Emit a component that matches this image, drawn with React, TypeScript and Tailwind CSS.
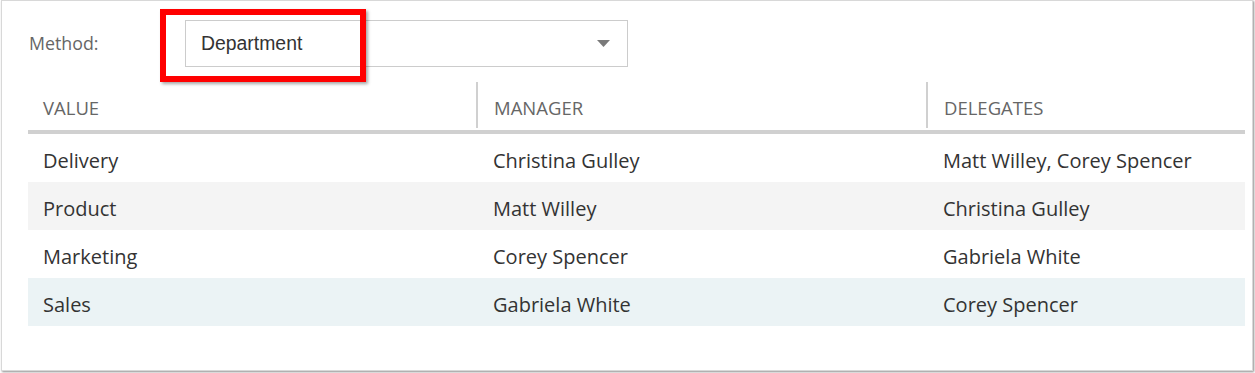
import React from 'react';

const rows = [
  { value: 'Delivery', manager: 'Christina Gulley', delegates: 'Matt Willey, Corey Spencer', bg: 'bg-white' },
  { value: 'Product', manager: 'Matt Willey', delegates: 'Christina Gulley', bg: 'bg-[#f4f4f4]' },
  { value: 'Marketing', manager: 'Corey Spencer', delegates: 'Gabriela White', bg: 'bg-white' },
  { value: 'Sales', manager: 'Gabriela White', delegates: 'Corey Spencer', bg: 'bg-[#ebf3f5]' },
];

const App: React.FC = () => {
  return (
    <div className="w-[1255px] h-[373px] bg-white font-['Open_Sans',sans-serif]">
      <div className="relative ml-[1px] w-[1252px] h-[371px] border border-[#d8d8d8] shadow-[1px_1px_2px_rgba(0,0,0,0.45)] pl-[26px] pr-[6px] pt-[19px]">
        {/* method picker */}
        <div className="flex items-center h-[47px]">
          <span className="w-[157px] text-[17.8px] text-[#666] pl-[1px]">Method:</span>
          <div className="flex items-center justify-between w-[443px] h-[47px] border border-[#cccccc] pl-[15px] pr-[17px]">
            <span className="font-['Liberation_Sans',Arial,sans-serif] text-[19.4px] text-[#333]">Department</span>
            <svg width="13" height="8" viewBox="0 0 13 8">
              <polygon points="0,0 13,0 6.5,7" fill="#7a7a7a" />
            </svg>
          </div>
        </div>

        {/* table */}
        <div className="mt-[15px] w-[1217px]">
          <div className="flex h-[52px] pb-[2px] border-b-4 border-[#d0d0d0] text-[18.5px] text-[#666]">
            <div className="w-[448px] flex items-center pl-[15px] pt-[6px]">VALUE</div>
            <div className="w-[450px] flex items-center pl-[16px] pt-[6px] border-l-2 border-[#d0d0d0]">MANAGER</div>
            <div className="flex-1 flex items-center pl-[16px] pt-[6px] border-l-2 border-[#d0d0d0]">DELEGATES</div>
          </div>
          {rows.map((r) => (
            <div key={r.value} className={`flex h-[48px] items-center pt-[5px] text-[20px] text-[#333] ${r.bg}`}>
              <div className="w-[449px] pl-[15px]">{r.value}</div>
              <div className="w-[450px] pl-[16px]">{r.manager}</div>
              <div className="flex-1 pl-[16px]">{r.delegates}</div>
            </div>
          ))}
        </div>

        {/* red highlight */}
        <div className="absolute left-[158px] top-[8px] w-[206px] h-[73px] border-[6px] border-[#ff0000] shadow-[2px_2px_3px_rgba(0,0,0,0.35)]" />
      </div>
    </div>
  );
};

export default App;
